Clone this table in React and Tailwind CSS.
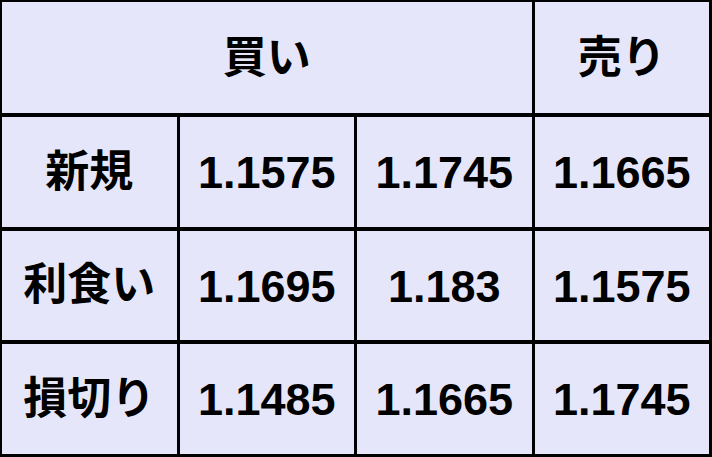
import React from "react";

const rows = [
  { label: "新規", values: ["1.1575", "1.1745", "1.1665"] },
  { label: "利食い", values: ["1.1695", "1.183", "1.1575"] },
  { label: "損切り", values: ["1.1485", "1.1665", "1.1745"] },
];

const cell =
  "bg-[#e6e6fa] flex items-center justify-center text-black font-bold";

const App = () => {
  return (
    <div className="w-[712px] h-[457px] bg-white font-['Liberation_Sans','Noto_Sans_CJK_JP',sans-serif]">
      <div className="w-full h-full bg-black pt-[2px] pl-[2px] pr-[3px] pb-[3px] grid grid-cols-4 grid-rows-[111px_1fr_1fr_1fr] gap-x-[3px] gap-y-[4px]">
        <div className={`${cell} col-span-3 text-[44px]`}>買い</div>
        <div className={`${cell} text-[44px]`}>売り</div>
        {rows.map((row) => (
          <React.Fragment key={row.label}>
            <div className={`${cell} text-[44px]`}>{row.label}</div>
            {row.values.map((v, i) => (
              <div key={i} className={`${cell} text-[45px] pt-[2px]`}>
                {v}
              </div>
            ))}
          </React.Fragment>
        ))}
      </div>
    </div>
  );
};

export default App;
